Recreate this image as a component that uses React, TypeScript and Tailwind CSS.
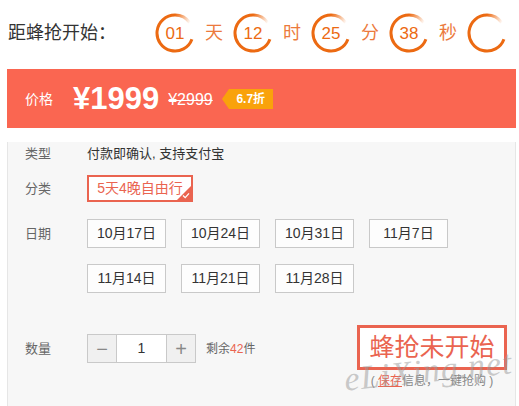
import { Fragment } from 'react';

const countdown = [
  { num: '01', unit: '天' },
  { num: '12', unit: '时' },
  { num: '25', unit: '分' },
  { num: '38', unit: '秒' },
];

const dates = [
  ['10月17日', '10月24日', '10月31日', '11月7日'],
  ['11月14日', '11月21日', '11月28日'],
];

function Ring({ id, children }: { id: string; children?: React.ReactNode }) {
  return (
    <div className="relative w-[40px] h-[40px] flex items-center justify-center">
      <svg className="absolute inset-0" width="40" height="40" viewBox="0 0 40 40">
        <defs>
          <linearGradient id={id} gradientUnits="userSpaceOnUse" x1="20" y1="2" x2="35" y2="10">
            <stop offset="0" stopColor="#ec6a12" />
            <stop offset="1" stopColor="#ec6a12" stopOpacity="0" />
          </linearGradient>
        </defs>
        <path d="M36.91 26.16 A18 18 0 1 1 20 2" fill="none" stroke="#ec6a12" strokeWidth="3" />
        <path d="M20 2 A18 18 0 0 1 34.75 9.68" fill="none" stroke={`url(#${id})`} strokeWidth="3" />
      </svg>
      <span className="relative text-[17px] text-[#ec6a12] font-['Liberation_Sans',sans-serif] leading-none">
        {children}
      </span>
    </div>
  );
}

export default function App() {
  return (
    <div className="w-[519px] h-[406px] bg-white relative overflow-hidden font-['Liberation_Sans','Noto_Sans_CJK_SC',sans-serif]">
      {/* 倒计时 */}
      <div className="flex items-center h-[66px] pl-[8px]">
        <span className="text-[18px] text-[#333] w-[147px]">距蜂抢开始：</span>
        {countdown.map((c, i) => (
          <Fragment key={c.unit}>
            <Ring id={`g${i}`}>{c.num}</Ring>
            <span className="text-[18px] text-[#ec7a3c] w-[38px] text-center">{c.unit}</span>
          </Fragment>
        ))}
        <Ring id="g4" />
      </div>

      <div className="ml-[7px] mr-[3px] mt-[3px]">
        {/* 价格 */}
        <div className="h-[59px] bg-[#fa6651] flex items-center pl-[18px] text-white">
          <span className="text-[14px] mt-[1px]">价格</span>
          <span className="ml-[20px] text-[31px] font-bold leading-none">¥1999</span>
          <span className="ml-[9px] text-[16px] line-through mt-[2px]">¥2999</span>
          <div className="ml-[9px] flex items-center">
            <div className="w-0 h-0 border-y-[10px] border-y-transparent border-r-[7px] border-r-[#f9a20b]" />
            <div className="h-[20px] w-[44px] bg-[#f9a20b] text-[12px] font-bold flex items-center justify-center">6.7折</div>
          </div>
        </div>

        {/* 详情 */}
        <div className="h-[274px] bg-[#f7f7f7] border border-t-0 border-[#e6e6e6] pl-[17px] pr-[8px] relative">
          <div className="flex items-center h-[24px] mt-[14px] text-[13px]">
            <span className="w-[62px] text-[#666]">类型</span>
            <span className="text-[#333]">付款即确认, 支持支付宝</span>
          </div>

          <div className="flex items-center mt-[9px]">
            <span className="w-[62px] text-[13px] text-[#666]">分类</span>
            <div className="relative h-[27px] w-[106px] border-2 border-[#ea6450] bg-white flex items-center justify-center text-[14px] text-[#ea6450]">
              5天4晚自由行
              <div className="absolute right-0 bottom-0 w-0 h-0 border-l-[14px] border-l-transparent border-b-[14px] border-b-[#ea6450]" />
              <svg className="absolute right-[1px] bottom-[1px]" width="8" height="7" viewBox="0 0 8 7">
                <path d="M1 3.5 L3.2 5.6 L7 1.4" fill="none" stroke="#fff" strokeWidth="1.3" />
              </svg>
            </div>
          </div>

          <div className="flex mt-[17px]">
            <span className="w-[62px] text-[13px] text-[#666] h-[29px] flex items-center">日期</span>
            <div className="flex flex-col gap-[16px]">
              {dates.map((row, r) => (
                <div key={r} className="flex gap-[15px]">
                  {row.map((d) => (
                    <div key={d} className="w-[79px] h-[29px] border border-[#c9c9c9] bg-[#fdfdfd] flex items-center justify-center text-[14px] text-[#333]">
                      {d}
                    </div>
                  ))}
                </div>
              ))}
            </div>
          </div>

          <div className="flex items-start mt-[32px]">
            <div className="flex items-center mt-[9px]">
              <span className="w-[62px] text-[13px] text-[#666]">数量</span>
              <div className="flex h-[29px] border border-[#c9c9c9]">
                <div className="w-[28px] bg-[#f0f0f0] flex items-center justify-center text-[20px] text-[#888]">−</div>
                <div className="w-[51px] bg-white border-x border-[#c9c9c9] flex items-center justify-center text-[14px] text-[#333]">1</div>
                <div className="w-[28px] bg-[#f0f0f0] flex items-center justify-center text-[20px] text-[#888]">+</div>
              </div>
              <span className="ml-[10px] text-[12px] text-[#666]">
                剩余<span className="text-[#ea6450]">42</span>件
              </span>
            </div>
            <div className="ml-auto flex flex-col items-center">
              <div className="w-[150px] h-[45px] border-[3px] border-[#ea6450] bg-white flex items-center justify-center text-[25px] text-[#ea6450]">
                蜂抢未开始
              </div>
              <span className="mt-[2px] text-[12px] text-[#888]">
                ( <span className="text-[#ea6450] underline">保存</span>信息，一键抢购 )
              </span>
            </div>
          </div>

          {/* 水印 */}
          <span className="absolute left-[336px] top-[212px] leading-none -rotate-[6deg] text-[34px] italic tracking-[1px] text-[#999]/50 font-['Liberation_Serif',serif] pointer-events-none">
            eLiXing.net
          </span>
        </div>
      </div>
    </div>
  );
}
